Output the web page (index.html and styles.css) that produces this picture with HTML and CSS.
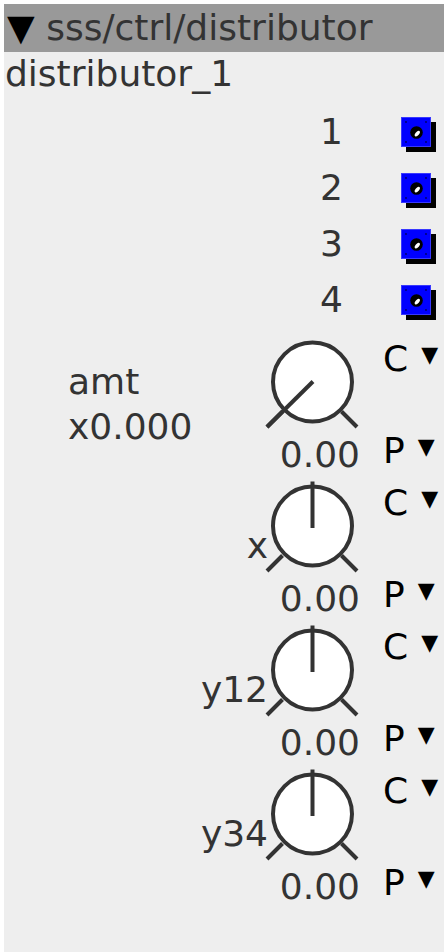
FILE: index.html
```html
<!DOCTYPE html>
<html>
<head>
<meta charset="utf-8">
<link rel="stylesheet" href="styles.css">
</head>
<body>
<div class="panel">
  <div class="header"><span class="tri">▼</span> sss/ctrl/distributor</div>
  <div class="name">distributor_1</div>

  <div class="out"><span class="num">1</span><svg class="jack" width="35" height="35" viewBox="0 0 35 35"><rect x="5" y="5" width="30" height="30" fill="#000"/><rect x="0.5" y="0.5" width="29" height="29" fill="#0000ff" stroke="#3838ff"/><circle cx="5" cy="5" r="0.9" fill="#000060"/><circle cx="25" cy="5" r="0.9" fill="#000060"/><circle cx="5" cy="25" r="0.9" fill="#000060"/><circle cx="25" cy="25" r="0.9" fill="#000060"/><circle cx="15.5" cy="15.5" r="6.3" fill="#000"/><ellipse cx="16.3" cy="16.6" rx="1.8" ry="3.4" transform="rotate(40 16.3 16.6)" fill="#fff"/></svg></div>
  <div class="out"><span class="num">2</span><svg class="jack" width="35" height="35" viewBox="0 0 35 35"><rect x="5" y="5" width="30" height="30" fill="#000"/><rect x="0.5" y="0.5" width="29" height="29" fill="#0000ff" stroke="#3838ff"/><circle cx="5" cy="5" r="0.9" fill="#000060"/><circle cx="25" cy="5" r="0.9" fill="#000060"/><circle cx="5" cy="25" r="0.9" fill="#000060"/><circle cx="25" cy="25" r="0.9" fill="#000060"/><circle cx="15.5" cy="15.5" r="6.3" fill="#000"/><ellipse cx="16.3" cy="16.6" rx="1.8" ry="3.4" transform="rotate(40 16.3 16.6)" fill="#fff"/></svg></div>
  <div class="out"><span class="num">3</span><svg class="jack" width="35" height="35" viewBox="0 0 35 35"><rect x="5" y="5" width="30" height="30" fill="#000"/><rect x="0.5" y="0.5" width="29" height="29" fill="#0000ff" stroke="#3838ff"/><circle cx="5" cy="5" r="0.9" fill="#000060"/><circle cx="25" cy="5" r="0.9" fill="#000060"/><circle cx="5" cy="25" r="0.9" fill="#000060"/><circle cx="25" cy="25" r="0.9" fill="#000060"/><circle cx="15.5" cy="15.5" r="6.3" fill="#000"/><ellipse cx="16.3" cy="16.6" rx="1.8" ry="3.4" transform="rotate(40 16.3 16.6)" fill="#fff"/></svg></div>
  <div class="out"><span class="num">4</span><svg class="jack" width="35" height="35" viewBox="0 0 35 35"><rect x="5" y="5" width="30" height="30" fill="#000"/><rect x="0.5" y="0.5" width="29" height="29" fill="#0000ff" stroke="#3838ff"/><circle cx="5" cy="5" r="0.9" fill="#000060"/><circle cx="25" cy="5" r="0.9" fill="#000060"/><circle cx="5" cy="25" r="0.9" fill="#000060"/><circle cx="25" cy="25" r="0.9" fill="#000060"/><circle cx="15.5" cy="15.5" r="6.3" fill="#000"/><ellipse cx="16.3" cy="16.6" rx="1.8" ry="3.4" transform="rotate(40 16.3 16.6)" fill="#fff"/></svg></div>

  <div class="krow">
    <div class="label label-multi">amt<br>x0.000</div>
    <div class="kcol">
      <svg class="knob" width="96" height="96" viewBox="0 0 96 96"><line x1="18.5" y1="77.5" x2="3" y2="93" /><line x1="77.5" y1="77.5" x2="93" y2="93"/><circle cx="48.5" cy="48" r="39.5"/><line x1="49" y1="47.5" x2="3" y2="93"/></svg>
      <div class="val">0.00</div>
    </div>
    <div class="cp"><div class="cpl">C<span class="dd">▼</span></div><div class="cpl">P<span class="dd">▼</span></div></div>
  </div>

  <div class="krow">
    <div class="label">x</div>
    <div class="kcol">
      <svg class="knob" width="96" height="96" viewBox="0 0 96 96"><line x1="18.5" y1="77.5" x2="3" y2="93" /><line x1="77.5" y1="77.5" x2="93" y2="93"/><circle cx="48.5" cy="48" r="39.5"/><line x1="48.5" y1="50" x2="48.5" y2="3.5"/></svg>
      <div class="val">0.00</div>
    </div>
    <div class="cp"><div class="cpl">C<span class="dd">▼</span></div><div class="cpl">P<span class="dd">▼</span></div></div>
  </div>

  <div class="krow">
    <div class="label">y12</div>
    <div class="kcol">
      <svg class="knob" width="96" height="96" viewBox="0 0 96 96"><line x1="18.5" y1="77.5" x2="3" y2="93" /><line x1="77.5" y1="77.5" x2="93" y2="93"/><circle cx="48.5" cy="48" r="39.5"/><line x1="48.5" y1="50" x2="48.5" y2="3.5"/></svg>
      <div class="val">0.00</div>
    </div>
    <div class="cp"><div class="cpl">C<span class="dd">▼</span></div><div class="cpl">P<span class="dd">▼</span></div></div>
  </div>

  <div class="krow">
    <div class="label">y34</div>
    <div class="kcol">
      <svg class="knob" width="96" height="96" viewBox="0 0 96 96"><line x1="18.5" y1="77.5" x2="3" y2="93" /><line x1="77.5" y1="77.5" x2="93" y2="93"/><circle cx="48.5" cy="48" r="39.5"/><line x1="48.5" y1="50" x2="48.5" y2="3.5"/></svg>
      <div class="val">0.00</div>
    </div>
    <div class="cp"><div class="cpl">C<span class="dd">▼</span></div><div class="cpl">P<span class="dd">▼</span></div></div>
  </div>
</div>
</body>
</html>
```

FILE: styles.css
```css
html, body {
  margin: 0;
  padding: 0;
  background: #ffffff;
}
body {
  padding: 4px 4px 0 4px;
  font-family: "DejaVu Sans", sans-serif;
  font-size: 36px;
  color: #333333;
}
.panel {
  width: 440px;
  min-height: 960px;
  background: #eeeeee;
}
.header {
  height: 48px;
  line-height: 48px;
  background: #999999;
  padding-left: 3px;
  white-space: nowrap;
  overflow: hidden;
}
.tri {
  color: #000;
}
.name {
  height: 52px;
  line-height: 44px;
  padding-left: 1px;
}
.out {
  height: 56px;
  line-height: 56px;
  display: flex;
  justify-content: flex-end;
  align-items: center;
  padding-right: 8px;
}
.num {
  margin-right: 58px;
}
.jack {
  display: block;
  margin-top: 5px;
}
.krow {
  height: 144px;
  display: flex;
  align-items: flex-start;
}
.label {
  flex: 1;
  text-align: right;
  line-height: 42px;
  padding-top: 53px;
  margin-right: -4px;
  position: relative;
}
.label-multi {
  text-align: left;
  line-height: 45px;
  padding-top: 31px;
  padding-left: 64px;
  margin-right: 0;
}
.kcol {
  width: 96px;
  margin-left: 0;
}
.knob {
  display: block;
  margin-top: 6px;
  fill: none;
  stroke: #333333;
  stroke-width: 4;
}
.knob circle {
  fill: #ffffff;
}
.val {
  text-align: right;
  line-height: 37px;
  margin-top: 6px;
  white-space: nowrap;
}
.cp {
  width: 58px;
  margin-left: 23px;
  margin-right: 3px;
  height: 144px;
  display: flex;
  flex-direction: column;
  justify-content: space-between;
  color: #000;
}
.cpl {
  display: flex;
  align-items: flex-start;
  line-height: 42px;
  white-space: nowrap;
}
.cpl:first-child {
  margin-top: 10px;
}
.dd {
  font-size: 22px;
  line-height: 22px;
  margin-left: 13px;
  margin-top: 6px;
}
```
